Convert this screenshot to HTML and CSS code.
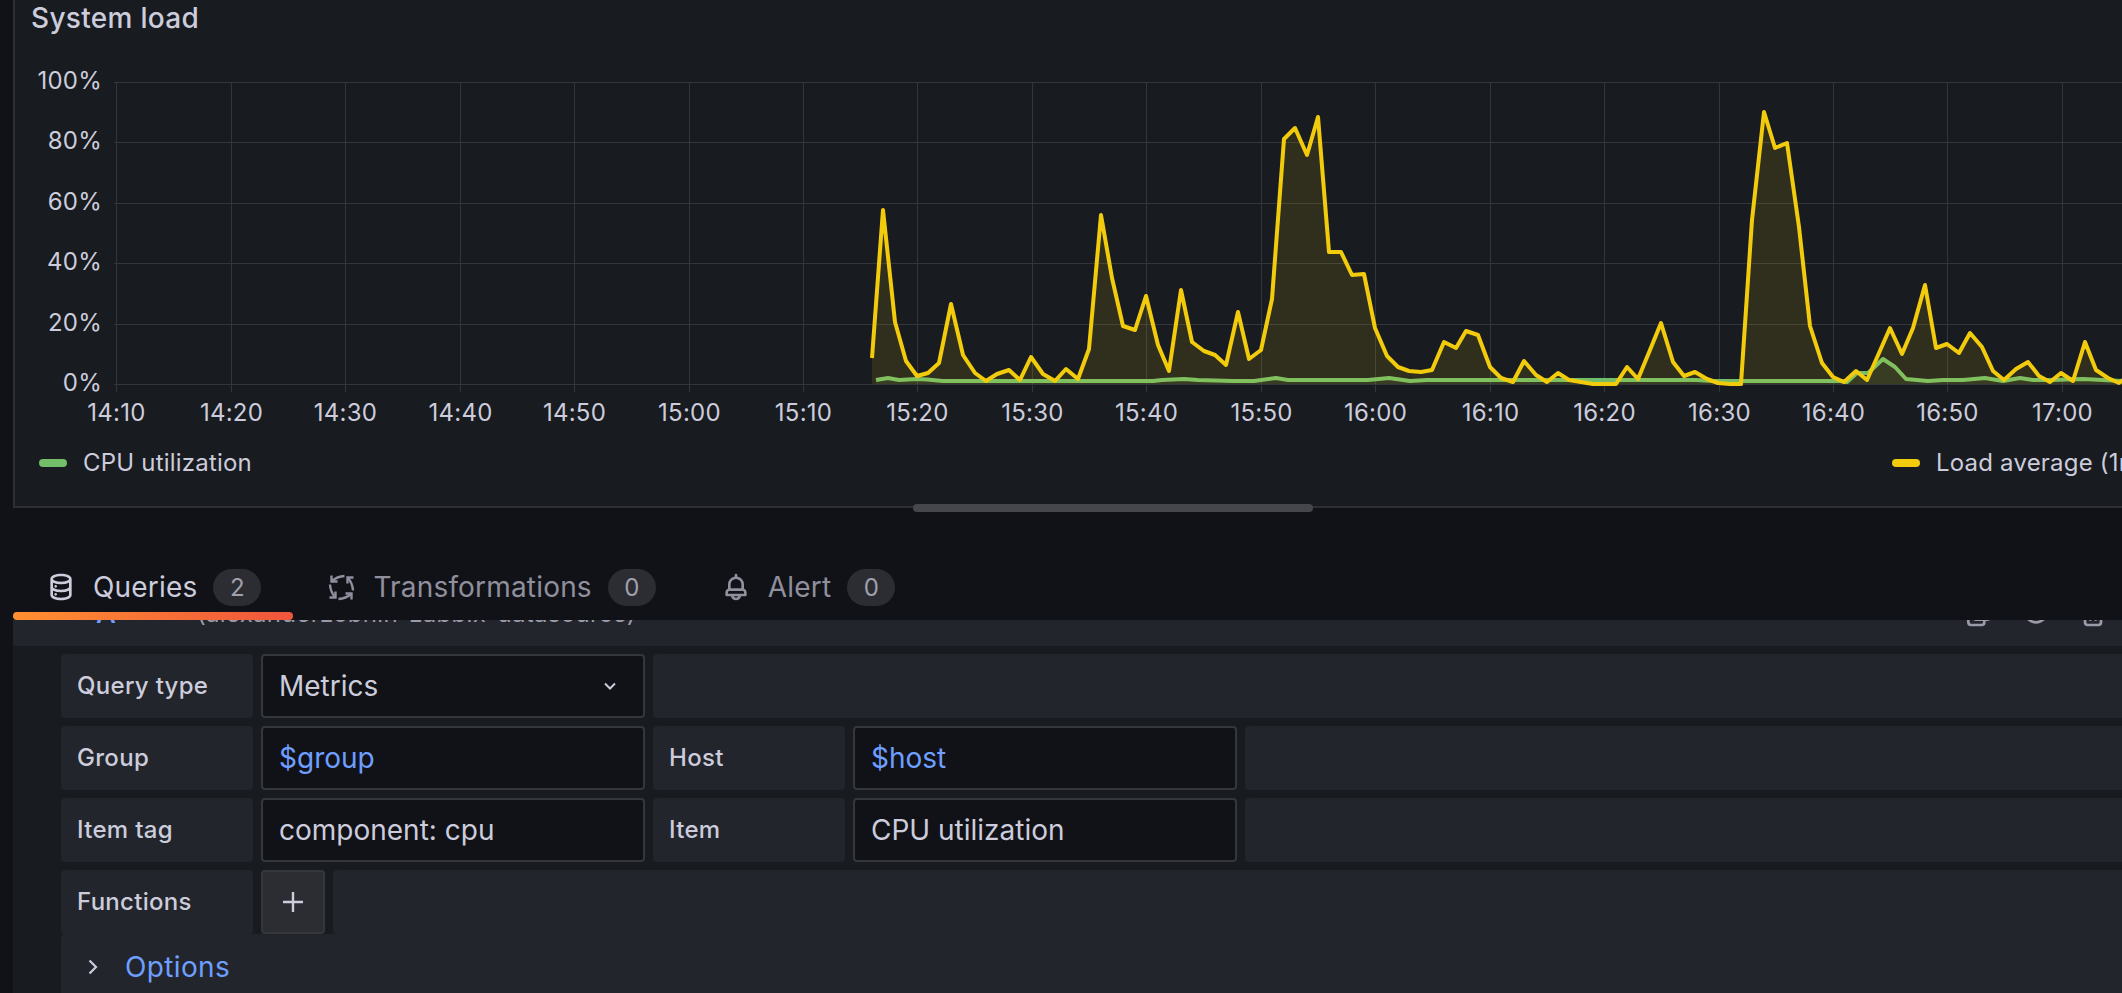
FILE: index.html
```html
<!DOCTYPE html>
<html lang="en">
<head>
<meta charset="utf-8">
<title>System load</title>
<link rel="stylesheet" href="styles.css">
</head>
<body>
<div class="page">
  <section class="panel">
    <h2 class="panel-title">System load</h2>
    <svg class="chart" viewBox="15 60 2285 385" width="2285" height="385">
      <g class="grid">
        <line x1="114" x2="2300" y1="82.5" y2="82.5"/>
        <line x1="114" x2="2300" y1="142.5" y2="142.5"/>
        <line x1="114" x2="2300" y1="203.5" y2="203.5"/>
        <line x1="114" x2="2300" y1="263.5" y2="263.5"/>
        <line x1="114" x2="2300" y1="324.5" y2="324.5"/>
        <line x1="114" x2="2300" y1="384.5" y2="384.5"/>
        <line x1="116.5" x2="116.5" y1="82" y2="392"/>
        <line x1="231.5" x2="231.5" y1="82" y2="392"/>
        <line x1="345.5" x2="345.5" y1="82" y2="392"/>
        <line x1="460.5" x2="460.5" y1="82" y2="392"/>
        <line x1="574.5" x2="574.5" y1="82" y2="392"/>
        <line x1="689.5" x2="689.5" y1="82" y2="392"/>
        <line x1="803.5" x2="803.5" y1="82" y2="392"/>
        <line x1="917.5" x2="917.5" y1="82" y2="392"/>
        <line x1="1032.5" x2="1032.5" y1="82" y2="392"/>
        <line x1="1146.5" x2="1146.5" y1="82" y2="392"/>
        <line x1="1261.5" x2="1261.5" y1="82" y2="392"/>
        <line x1="1375.5" x2="1375.5" y1="82" y2="392"/>
        <line x1="1490.5" x2="1490.5" y1="82" y2="392"/>
        <line x1="1604.5" x2="1604.5" y1="82" y2="392"/>
        <line x1="1719.5" x2="1719.5" y1="82" y2="392"/>
        <line x1="1833.5" x2="1833.5" y1="82" y2="392"/>
        <line x1="1947.5" x2="1947.5" y1="82" y2="392"/>
        <line x1="2062.5" x2="2062.5" y1="82" y2="392"/>
      </g>
      <g class="y-labels">
        <text x="102" y="89">100%</text>
        <text x="102" y="149">80%</text>
        <text x="102" y="210">60%</text>
        <text x="102" y="270">40%</text>
        <text x="102" y="331">20%</text>
        <text x="102" y="391">0%</text>
      </g>
      <g class="x-labels">
        <text x="116.5" y="421">14:10</text>
        <text x="231.5" y="421">14:20</text>
        <text x="345.5" y="421">14:30</text>
        <text x="460.5" y="421">14:40</text>
        <text x="574.5" y="421">14:50</text>
        <text x="689.5" y="421">15:00</text>
        <text x="803.5" y="421">15:10</text>
        <text x="917.5" y="421">15:20</text>
        <text x="1032.5" y="421">15:30</text>
        <text x="1146.5" y="421">15:40</text>
        <text x="1261.5" y="421">15:50</text>
        <text x="1375.5" y="421">16:00</text>
        <text x="1490.5" y="421">16:10</text>
        <text x="1604.5" y="421">16:20</text>
        <text x="1719.5" y="421">16:30</text>
        <text x="1833.5" y="421">16:40</text>
        <text x="1947.5" y="421">16:50</text>
        <text x="2062.5" y="421">17:00</text>
      </g>
      <polygon class="area-green" points="876,384 876,380 888,378 899,380 917,379 927,379.5 943,381 1153,381 1162,380 1184,379 1198,380 1233,381 1254,381 1276,378 1288,380 1368,380 1389,378 1410,381 1427,380 1696,380 1713,381 1840,381 1847,382 1857,373 1868,373 1883,359 1895,367 1906,379 1928,381 1943,380 1963,380 1985,378 2003,381 2020,378 2033,380 2050,380 2083,379 2103,380 2122,381 2122,384"/>
      <polyline class="line-green" points="876,380 888,378 899,380 917,379 927,379.5 943,381 1153,381 1162,380 1184,379 1198,380 1233,381 1254,381 1276,378 1288,380 1368,380 1389,378 1410,381 1427,380 1696,380 1713,381 1840,381 1847,382 1857,373 1868,373 1883,359 1895,367 1906,379 1928,381 1943,380 1963,380 1985,378 2003,381 2020,378 2033,380 2050,380 2083,379 2103,380 2122,381"/>
      <polygon class="area-yellow" points="872,384 872,358 883,210 895,322 906,361 917,376 928,373 939,363 951,304 963,355 975,373 986,381 997,374 1009,370 1020,380 1031,357 1043,374 1055,381 1066,369 1078,379 1089,349 1101,215 1112,278 1123,326 1135,330 1146,296 1158,345 1169,371 1181,290 1192,342 1204,351 1215,355 1226,365 1238,312 1249,359 1261,350 1272,299 1284,139 1295,128 1307,155 1318,117 1329,252 1341,252 1352,275 1364,274 1375,328 1387,356 1398,367 1409,371 1421,372 1432,370 1444,342 1456,348 1466,331 1478,335 1490,367 1501,378 1513,382 1524,361 1536,375 1547,382 1558,373 1569,380 1581,382 1593,384 1605,384 1616,384 1627,367 1638,379 1650,350 1661,323 1673,362 1684,376 1695,372 1707,379 1718,383 1730,384 1741,384 1752,220 1764,112 1775,148 1787,143 1799,227 1810,326 1822,363 1833,377 1844,382 1856,371 1867,380 1879,353 1890,328 1902,354 1913,328 1925,285 1936,348 1947,344 1959,353 1970,333 1982,347 1993,371 2004,380 2016,369 2028,362 2039,376 2050,382 2061,373 2073,381 2085,342 2096,370 2108,378 2119,383 2130,375 2130,384"/>
      <polyline class="line-yellow" points="872,358 883,210 895,322 906,361 917,376 928,373 939,363 951,304 963,355 975,373 986,381 997,374 1009,370 1020,380 1031,357 1043,374 1055,381 1066,369 1078,379 1089,349 1101,215 1112,278 1123,326 1135,330 1146,296 1158,345 1169,371 1181,290 1192,342 1204,351 1215,355 1226,365 1238,312 1249,359 1261,350 1272,299 1284,139 1295,128 1307,155 1318,117 1329,252 1341,252 1352,275 1364,274 1375,328 1387,356 1398,367 1409,371 1421,372 1432,370 1444,342 1456,348 1466,331 1478,335 1490,367 1501,378 1513,382 1524,361 1536,375 1547,382 1558,373 1569,380 1581,382 1593,384 1605,384 1616,384 1627,367 1638,379 1650,350 1661,323 1673,362 1684,376 1695,372 1707,379 1718,383 1730,384 1741,384 1752,220 1764,112 1775,148 1787,143 1799,227 1810,326 1822,363 1833,377 1844,382 1856,371 1867,380 1879,353 1890,328 1902,354 1913,328 1925,285 1936,348 1947,344 1959,353 1970,333 1982,347 1993,371 2004,380 2016,369 2028,362 2039,376 2050,382 2061,373 2073,381 2085,342 2096,370 2108,378 2119,383 2130,375"/>
    </svg>
    <div class="legend">
      <div class="legend-item legend-first"><span class="swatch swatch-green"></span><span class="legend-text">CPU utilization</span></div>
      <div class="legend-item"><span class="swatch swatch-yellow"></span><span class="legend-text">Load average (1m avg)</span></div>
    </div>
    <div class="scrollbar"></div>
  </section>

  <nav class="tabs">
    <div class="tab tab-active">
      <svg class="tab-icon" viewBox="0 0 24 24"><path d="M8,16.5a1,1,0,1,0,1,1A1,1,0,0,0,8,16.5ZM12,2C8,2,4,3.37,4,6V18c0,2.63,4,4,8,4s8-1.37,8-4V6C20,3.37,16,2,12,2Zm6,16c0,.71-2.28,2-6,2s-6-1.29-6-2V14.73A13.16,13.16,0,0,0,12,16a13.16,13.16,0,0,0,6-1.27Zm0-6c0,.71-2.28,2-6,2s-6-1.29-6-2V8.73A13.16,13.16,0,0,0,12,10a13.16,13.16,0,0,0,6-1.27ZM12,8C8.28,8,6,6.71,6,6s2.28-2,6-2,6,1.29,6,2S15.72,8,12,8ZM8,10.5a1,1,0,1,0,1,1A1,1,0,0,0,8,10.5Z"/></svg>
      <span class="tab-text">Queries</span><span class="counter">2</span>
    </div>
    <div class="tab">
      <svg class="tab-icon" viewBox="0 0 32 32">
        <g class="arrows">
          <g><path d="M19.5 5 Q12 5.5 7 10"/><path d="M6.5 4.5 V10.5 H12.5"/></g>
          <g transform="rotate(90 16.5 16.5)"><path d="M19.5 5 Q12 5.5 7 10"/><path d="M6.5 4.5 V10.5 H12.5"/></g>
          <g transform="rotate(180 16.5 16.5)"><path d="M19.5 5 Q12 5.5 7 10"/><path d="M6.5 4.5 V10.5 H12.5"/></g>
          <g transform="rotate(270 16.5 16.5)"><path d="M19.5 5 Q12 5.5 7 10"/><path d="M6.5 4.5 V10.5 H12.5"/></g>
        </g>
      </svg>
      <span class="tab-text">Transformations</span><span class="counter">0</span>
    </div>
    <div class="tab">
      <svg class="tab-icon" viewBox="0 0 24 24"><path d="M18,13.18V10a6,6,0,0,0-5-5.91V3a1,1,0,0,0-2,0V4.09A6,6,0,0,0,6,10v3.18A3,3,0,0,0,4,16v2a1,1,0,0,0,1,1H8.14a4,4,0,0,0,7.72,0H19a1,1,0,0,0,1-1V16A3,3,0,0,0,18,13.18ZM8,10a4,4,0,0,1,8,0v3H8Zm4,10a2,2,0,0,1-1.72-1h3.44A2,2,0,0,1,12,20Zm6-3H6V16a1,1,0,0,1,1-1H17a1,1,0,0,1,1,1Z"/></svg>
      <span class="tab-text">Alert</span><span class="counter">0</span>
    </div>
  </nav>

  <section class="editor">
    <header class="query-header">
      <div class="query-header-inner">
        <span class="ref-id">A</span>
        <span class="ds-name">(alexanderzobnin-zabbix-datasource)</span>
        <span class="header-actions">
          <svg class="action" viewBox="0 0 24 24"><path d="M21,8.94a1.31,1.31,0,0,0-.06-.27V8.58a1.07,1.07,0,0,0-.19-.28h0l-6-6h0a1.07,1.07,0,0,0-.28-.19.32.32,0,0,0-.09,0A.88.88,0,0,0,14.05,2H10A3,3,0,0,0,7,5V6H6A3,3,0,0,0,3,9V19a3,3,0,0,0,3,3h8a3,3,0,0,0,3-3V18h1a3,3,0,0,0,3-3V9S21,9,21,8.94ZM15,5.41,17.59,8H16a1,1,0,0,1-1-1ZM15,19a1,1,0,0,1-1,1H6a1,1,0,0,1-1-1V9A1,1,0,0,1,6,8H7v7a3,3,0,0,0,3,3h5Zm4-4a1,1,0,0,1-1,1H10a1,1,0,0,1-1-1V5a1,1,0,0,1,1-1h3V7a3,3,0,0,0,3,3h3Z"/></svg>
          <svg class="action" viewBox="0 0 24 24"><path d="M21.92,11.6C19.9,6.91,16.1,4,12,4S4.1,6.91,2.08,11.6a1,1,0,0,0,0,.8C4.1,17.09,7.9,20,12,20s7.9-2.91,9.92-7.6A1,1,0,0,0,21.92,11.6ZM12,18c-3.17,0-6.17-2.29-7.9-6C5.83,8.29,8.83,6,12,6s6.17,2.29,7.9,6C18.17,15.71,15.17,18,12,18ZM12,8a4,4,0,1,0,4,4A4,4,0,0,0,12,8Zm0,6a2,2,0,1,1,2-2A2,2,0,0,1,12,14Z"/></svg>
          <svg class="action" viewBox="0 0 24 24"><path d="M10,18a1,1,0,0,0,1-1V11a1,1,0,0,0-2,0v6A1,1,0,0,0,10,18ZM20,6H16V5a3,3,0,0,0-3-3H11A3,3,0,0,0,8,5V6H4A1,1,0,0,0,4,8H5V19a3,3,0,0,0,3,3h8a3,3,0,0,0,3-3V8h1a1,1,0,0,0,0-2ZM10,5a1,1,0,0,1,1-1h2a1,1,0,0,1,1,1V6H10Zm7,14a1,1,0,0,1-1,1H8a1,1,0,0,1-1-1V8H17Zm-3-1a1,1,0,0,0,1-1V11a1,1,0,0,0-2,0v6A1,1,0,0,0,14,18Z"/></svg>
        </span>
      </div>
    </header>

    <div class="form">
      <div class="row">
        <label class="label">Query type</label>
        <div class="input">Metrics
          <svg class="chevron-down" viewBox="0 0 16 16"><path d="M3 5.5 L8 10.5 L13 5.5"/></svg>
        </div>
        <div class="filler"></div>
      </div>
      <div class="row">
        <label class="label">Group</label>
        <div class="input input-var">$group</div>
        <label class="label">Host</label>
        <div class="input input-var">$host</div>
        <div class="filler"></div>
      </div>
      <div class="row">
        <label class="label">Item tag</label>
        <div class="input">component: cpu</div>
        <label class="label">Item</label>
        <div class="input">CPU utilization</div>
        <div class="filler"></div>
      </div>
      <div class="row row-functions">
        <label class="label">Functions</label>
        <button class="add-btn" type="button"><svg viewBox="0 0 20 20"><path d="M10 0 V20 M0 10 H20"/></svg></button>
        <div class="filler"></div>
      </div>
      <div class="options">
        <svg class="chevron-right" viewBox="0 0 10 16"><path d="M1.5 1.5 L8 8 L1.5 14.5"/></svg>
        <span class="options-text">Options</span>
      </div>
    </div>
  </section>
</div>
</body>
</html>
```
FILE: styles.css
```css
html, body {
  margin: 0;
  height: 993px;
  overflow: hidden;
  background: #111217;
}
.page {
  width: 2400px;
  height: 993px;
  padding-left: 13px;
  box-sizing: border-box;
  font-family: Inter, "Liberation Sans", sans-serif;
  color: #ccccdc;
}

/* Panel */
.panel {
  position: relative;
  height: 508px;
  box-sizing: border-box;
  background: #181b1f;
  border-left: 2px solid #2c2e33;
  border-bottom: 2px solid #2c2e33;
}
.panel-title {
  margin: 0;
  height: 60px;
  padding-left: 16px;
  font-size: 28px;
  font-weight: 500;
  line-height: 36px;
  letter-spacing: .3px;
}
.chart {
  display: block;
}
.grid line {
  stroke: #33363a;
  stroke-width: 1;
}
.y-labels text, .x-labels text {
  font-family: Inter, "Liberation Sans", sans-serif;
  font-size: 24px;
  letter-spacing: .25px;
  fill: #ccccdc;
}
.y-labels text { text-anchor: end; }
.x-labels text { text-anchor: middle; }
.line-yellow, .line-green {
  fill: none;
  stroke-width: 4;
  stroke-linejoin: round;
}
.line-yellow { stroke: #f2cc0c; }
.line-green { stroke: #73bf69; }
.area-yellow { fill: #f2cc0c; fill-opacity: .11; }
.area-green { fill: #73bf69; fill-opacity: .1; }

.legend {
  display: flex;
  align-items: center;
  height: 36px;
  font-size: 24px;
  padding-left: 24px;
}
.legend-item {
  display: flex;
  align-items: center;
  white-space: nowrap;
}
.legend-first { width: 1853px; }
.legend-text {
  letter-spacing: .2px;
  padding-bottom: 2px;
}
.swatch {
  width: 28px;
  height: 8px;
  border-radius: 4px;
  margin-right: 16px;
}
.swatch-green { background: #73bf69; }
.swatch-yellow { background: #f2cc0c; }
.scrollbar {
  position: absolute;
  left: 898px;
  top: 504px;
  width: 400px;
  height: 8px;
  border-radius: 4px;
  background: #45474c;
}

/* Tabs */
.tabs {
  display: flex;
  align-items: flex-end;
  height: 112px;
  position: relative;
}
.tab {
  position: relative;
  display: flex;
  align-items: center;
  height: 66px;
  padding: 0 32px;
  font-size: 28px;
  color: #8f8f9d;
}
.tab-text { letter-spacing: .18px; }
.tab-active { color: #ccccdc; }
.tab-active::after {
  content: "";
  position: absolute;
  left: 0;
  right: 0;
  bottom: 0;
  height: 8px;
  border-radius: 4px;
  background: linear-gradient(90deg, #ff8f30, #f0553c);
}
.tab-icon {
  width: 32px;
  height: 32px;
  margin-right: 16px;
  fill: currentColor;
}
.arrows path {
  fill: none;
  stroke: currentColor;
  stroke-width: 2.4;
}
.counter {
  width: 48px;
  height: 37px;
  margin-left: 16px;
  border-radius: 19px;
  background: #2c2d32;
  color: #a0a0ad;
  font-size: 24px;
  line-height: 37px;
  text-align: center;
}

/* Query editor */
.editor {
  background: #181b1f;
  height: 373px;
}
.query-header {
  height: 26px;
  overflow: hidden;
  background: #22252b;
  border-radius: 0 0 4px 4px;
}
.query-header-inner {
  display: flex;
  align-items: center;
  height: 66px;
  width: 2096px;
  margin-top: -40px;
  box-sizing: border-box;
  padding-left: 83px;
}
.ref-id {
  color: #6e9fff;
  font-size: 28px;
  font-weight: 500;
  width: 101px;
}
.ds-name {
  font-size: 24px;
  letter-spacing: .3px;
  color: #9a9aa8;
}
.header-actions {
  display: flex;
  gap: 25px;
  margin-left: auto;
}
.action {
  width: 32px;
  height: 32px;
  fill: #9a9aa8;
}

.form {
  display: flex;
  flex-direction: column;
  gap: 8px;
  padding: 8px 0 0 48px;
}
.row {
  display: flex;
  gap: 8px;
  height: 64px;
}
.label {
  display: flex;
  align-items: center;
  width: 192px;
  box-sizing: border-box;
  padding: 0 0 2px 16px;
  background: #22252b;
  border-radius: 4px;
  font-size: 24px;
  font-weight: 500;
  letter-spacing: .3px;
}
.input {
  display: flex;
  align-items: center;
  justify-content: space-between;
  width: 384px;
  box-sizing: border-box;
  padding: 0 25px 0 16px;
  background: #111217;
  border: 2px solid #35373c;
  border-radius: 4px;
  font-size: 28px;
}
.input-var { color: #6e9fff; }
.chevron-down {
  width: 16px;
  height: 16px;
  fill: none;
  stroke: #ccccdc;
  stroke-width: 2;
}
.filler {
  flex: 1;
  background: #22252b;
  border-radius: 4px;
}
.add-btn {
  display: flex;
  align-items: center;
  justify-content: center;
  width: 64px;
  padding: 0;
  background: #2c2d32;
  border: 2px solid #35373c;
  border-radius: 4px;
}
.add-btn svg {
  width: 20px;
  height: 20px;
  fill: none;
  stroke: #ccccdc;
  stroke-width: 2.4;
}
.options {
  display: flex;
  align-items: center;
  height: 66px;
  margin-top: -8px;
  background: #22252b;
  border-radius: 4px 0 0 0;
  font-size: 28px;
  color: #6e9fff;
}
.options-text { letter-spacing: .36px; }
.chevron-right {
  width: 10px;
  height: 16px;
  margin: 0 27px 0 27px;
  fill: none;
  stroke: #ccccdc;
  stroke-width: 2.2;
}
```
